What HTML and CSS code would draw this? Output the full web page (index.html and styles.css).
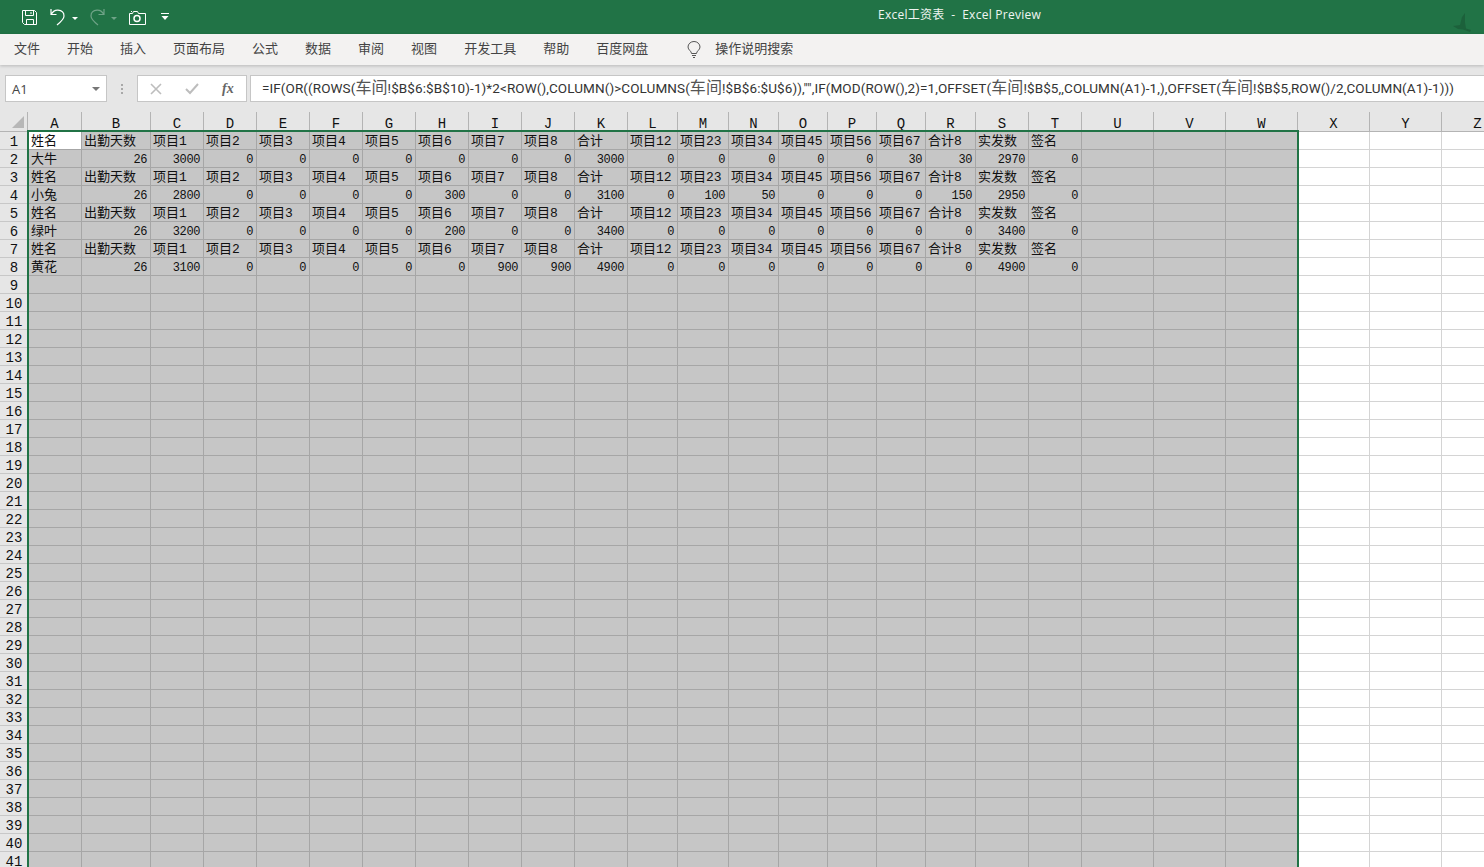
FILE: index.html
```html
<!DOCTYPE html>
<html lang="zh-CN">
  <head>
    <meta charset="utf-8" />
    <title>Excel工资表 - Excel Preview</title>
    <link rel="stylesheet" href="styles.css">
  </head>

  <body>
    <div class="title-bar">
      <div class="qat">
        <svg class="qat-save" width="17" height="17" viewBox="0 0 17 17" fill="none" stroke="#fff">
          <path d="M1.5 1.5h12l2 2v12h-12l-2-2z" />
          <path d="M4.5 1.5v5h8v-5M10 3v2M5.5 15.5v-5h7v5" />
        </svg>
        <svg class="qat-undo" width="16" height="18" viewBox="0 0 16 18" fill="none" stroke="#fff" stroke-width="1.2">
          <path d="M1 1v5.5h5.5M1.3 6.3C3 3.3 5.5 2 8 2.2c3.400.3 6 2.500 6 5.800 0 2.500-1.500 4.500-7 9" />
        </svg>
        <span class="caret"></span>
        <svg class="qat-redo" width="16" height="18" viewBox="0 0 16 18" fill="none" stroke="#6fa387" stroke-width="1.2">
          <path d="M15 1v5.5H9.500M14.700 6.300C13 3.300 10.500 2 8 2.200 4.600 2.500 2 4.700 2 8c0 2.500 1.500 4.500 7 9" />
        </svg>
        <span class="caret caret-dim"></span>
        <svg class="qat-camera" width="17" height="15" viewBox="0 0 17 15" fill="none" stroke="#fff">
          <path d="M.5 3.500h3l1-2h4l1 2h7v11H.5z" />
          <circle cx="8" cy="8.500" r="3" stroke-width="1.500" />
          <path d="M2.500 1v1" />
        </svg>
        <svg class="qat-more" width="8" height="8" viewBox="0 0 8 8" fill="#fff">
          <path d="M0 0h8v1H0zM.5 3h7L4 7z" />
        </svg>
      </div>
      <div class="doc-title">Excel工资表&nbsp; - &nbsp;Excel Preview</div>
      <svg class="bird" width="18" height="20" viewBox="0 0 18 20" fill="#1c613b">
        <path d="M12 0 9 4 7 12 0 13l5 3 5 .500 7 2.500 1-2-5-1.500-1-6z" />
      </svg>
    </div>

    <div class="tabs">
      <span>文件</span>
      <span>开始</span>
      <span>插入</span>
      <span>页面布局</span>
      <span>公式</span>
      <span>数据</span>
      <span>审阅</span>
      <span>视图</span>
      <span>开发工具</span>
      <span>帮助</span>
      <span>百度网盘</span>
      <svg class="bulb" width="14" height="18" viewBox="0 0 14 18" fill="none" stroke="#555">
        <path d="M4.500 12.500C4.500 10 1 9 1 6a6 5.500 0 0 1 12 0c0 3-3.500 4-3.500 6.500z" />
        <path d="M5 14.500h4M6 16.500h2" />
      </svg>
      <span class="search">操作说明搜索</span>
    </div>

    <div class="formula-bar">
      <div class="name-box">
        <span>A1</span>
        <span class="name-arrow"></span>
      </div>
      <div class="bar-dots"><i></i><i></i><i></i></div>
      <div class="fx-box">
        <svg width="12" height="12" viewBox="0 0 12 12" stroke="#bdbdbd" stroke-width="1.600">
          <path d="M1 1l10 10M11 1 1 11" />
        </svg>
        <svg width="14" height="12" viewBox="0 0 14 12" fill="none" stroke="#bdbdbd" stroke-width="2">
          <path d="M1 6l4 4 8-9" />
        </svg>
        <span class="fx">fx</span>
      </div>
      <div class="formula">=IF(OR((ROWS(<span class="cjk">车间</span>!$B$6:$B$10)-1)*2&lt;ROW(),COLUMN()&gt;COLUMNS(<span class="cjk">车间</span>!$B$6:$U$6)),"",IF(MOD(ROW(),2)=1,OFFSET(<span class="cjk">车间</span>!$B$5,,COLUMN(A1)-1,),OFFSET(<span class="cjk">车间</span>!$B$5,ROW()/2,COLUMN(A1)-1)))</div>
    </div>

    <div class="sheet-wrap">
      <div class="sheet" id="sheet"></div>
      <div class="selection"></div>
    </div>

    <script src="grid.js"></script>
  </body>
</html>
```

FILE: styles.css
```css
html,
body {
  margin: 0;
  height: 867px;
  overflow: hidden;
  background: #e6e6e6;
}

body {
  font-family: "Noto Sans CJK SC", sans-serif;
  color: #444;
}

.title-bar {
  display: flex;
  align-items: center;
  height: 34px;
  background: #217346;
  position: relative;
}

.qat {
  display: flex;
  align-items: center;
  width: 878px;
  padding-left: 21px;
  box-sizing: border-box;
}

.qat-undo {
  margin-left: 12px;
}

.qat-redo {
  margin-left: 11px;
}

.qat-camera {
  margin-left: 12px;
}

.qat-more {
  margin-left: 15px;
}

.caret {
  width: 0;
  height: 0;
  margin-left: 6px;
  margin-top: 2px;
  border-left: 3px solid transparent;
  border-right: 3px solid transparent;
  border-top: 3px solid #fff;
}

.caret-dim {
  border-top-color: #6fa387;
}

.doc-title {
  font-family: "Open Sans", "Noto Sans CJK SC", sans-serif;
  font-size: 12px;
  letter-spacing: 0.26px;
  color: #f0f5f2;
  margin-top: -6px;
  white-space: nowrap;
}

.bird {
  position: absolute;
  left: 1453px;
  top: 13px;
}

.tabs {
  display: flex;
  align-items: center;
  gap: 27px;
  height: 31px;
  padding-left: 14px;
  padding-bottom: 4px;
  box-sizing: border-box;
  background: #f3f2f1;
  box-shadow: 0 1px 3px rgba(0, 0, 0, 0.2);
  font-size: 13px;
  position: relative;
}

.bulb {
  margin-left: 12px;
  margin-top: 4px;
}

.search {
  margin-left: -13px;
}

.formula-bar {
  display: flex;
  align-items: stretch;
  height: 27px;
  margin-top: 10px;
  padding-left: 5px;
}

.name-box {
  display: flex;
  align-items: center;
  justify-content: space-between;
  box-sizing: border-box;
  width: 102px;
  padding: 0 6px;
  background: #fff;
  border: 1px solid #c6c6c6;
  font-family: "Open Sans", sans-serif;
  font-size: 13px;
}

.name-arrow {
  width: 0;
  height: 0;
  border-left: 4px solid transparent;
  border-right: 4px solid transparent;
  border-top: 4px solid #777;
}

.bar-dots {
  display: flex;
  flex-direction: column;
  justify-content: center;
  gap: 2px;
  width: 30px;
  align-items: center;
}

.bar-dots i {
  width: 2px;
  height: 2px;
  background: #a8a8a8;
}

.fx-box {
  display: flex;
  align-items: center;
  box-sizing: border-box;
  width: 110px;
  padding-left: 12px;
  gap: 23px;
  background: #fff;
  border: 1px solid #c6c6c6;
}

.fx {
  font-family: "Liberation Serif", serif;
  font-style: italic;
  font-weight: bold;
  font-size: 14px;
  color: #666;
}

.formula {
  flex: 1;
  margin-left: 3px;
  padding-left: 11px;
  background: #fff;
  border: 1px solid #c6c6c6;
  border-right: 0;
  font-family: "Roboto", "Noto Sans CJK SC", sans-serif;
  font-size: 13.5px;
  letter-spacing: 0.09px;
  line-height: 23px;
  color: #333;
  white-space: nowrap;
  overflow: hidden;
}

.formula .cjk {
  font-size: 16px;
  color: #555;
}

.sheet-wrap {
  position: relative;
  margin-top: 10px;
}

.sheet {
  display: grid;
  grid-template-columns: 28px 54px 69px repeat(9, 53px) 50px 51px 50px 49px 49px 49px 50px 53px 53px repeat(6, 72px);
  grid-template-rows: 20px;
  grid-auto-rows: 18px;
  width: 1600px;
  font-family: "Liberation Mono", "Noto Sans CJK SC", monospace;
  color: #111;
}

.corner {
  position: relative;
  border-right: 1px solid #b4b4b4;
  border-bottom: 1px solid #b4b4b4;
}

.corner::after {
  content: "";
  position: absolute;
  right: 3px;
  bottom: 3px;
  width: 0;
  height: 0;
  border-left: 12px solid transparent;
  border-bottom: 12px solid #b7b7b7;
}

.col-head {
  text-align: center;
  font-size: 14px;
  line-height: 25px;
  background: #e6e6e6;
  border-right: 1px solid #b4b4b4;
  border-bottom: 1px solid #b4b4b4;
}

.row-head {
  text-align: center;
  font-size: 14px;
  line-height: 21px;
  background: #e6e6e6;
  border-bottom: 1px solid #c8c8c8;
  overflow: hidden;
}

.cell {
  box-sizing: border-box;
  padding: 1px 3px 0 2px;
  font-size: 13px;
  line-height: 18px;
  background: #fff;
  border-right: 1px solid #d4d4d4;
  border-bottom: 1px solid #d4d4d4;
  white-space: nowrap;
  overflow: hidden;
}

.row-head + .cell {
  padding-left: 3px;
}

.cell.selected {
  background: #c6c6c6;
  border-right-color: #a6a6a6;
  border-bottom-color: #a6a6a6;
}

.cell.active {
  background: #fff;
}

.cell.num {
  text-align: right;
  font-size: 12px;
  letter-spacing: -0.4px;
}

.selection {
  position: absolute;
  left: 27px;
  top: 18px;
  width: 1268px;
  height: 760px;
  border: 2px solid #217346;
  pointer-events: none;
}
```

FILE: grid.js
```js
const letters = "ABCDEFGHIJKLMNOPQRSTUVWXYZ".split("");
const rowCount = 41;
const lastSelected = 22; // column W

const header = ["姓名", "出勤天数", "项目1", "项目2", "项目3", "项目4", "项目5", "项目6", "项目7", "项目8", "合计",
  "项目12", "项目23", "项目34", "项目45", "项目56", "项目67", "合计8", "实发数", "签名"];

const people = [
  ["大牛", 26, 3000, 0, 0, 0, 0, 0, 0, 0, 3000, 0, 0, 0, 0, 0, 30, 30, 2970, 0],
  ["小兔", 26, 2800, 0, 0, 0, 0, 300, 0, 0, 3100, 0, 100, 50, 0, 0, 0, 150, 2950, 0],
  ["绿叶", 26, 3200, 0, 0, 0, 0, 200, 0, 0, 3400, 0, 0, 0, 0, 0, 0, 0, 3400, 0],
  ["黄花", 26, 3100, 0, 0, 0, 0, 0, 900, 900, 4900, 0, 0, 0, 0, 0, 0, 0, 4900, 0]
];

function addDiv(parent, className, text) {
  const div = document.createElement("div");
  div.className = className;
  if (text !== undefined) {
    div.textContent = text;
  }
  parent.appendChild(div);
}

const sheet = document.getElementById("sheet");

addDiv(sheet, "corner");
letters.forEach(letter => addDiv(sheet, "col-head", letter));

for (let row = 1; row <= rowCount; row++) {
  addDiv(sheet, "row-head", row);
  // rows 1-8 alternate the header line and one person
  let values = [];
  if (row <= 8) {
    values = row % 2 === 1 ? header : people[row / 2 - 1];
  }
  letters.forEach((letter, col) => {
    let className = "cell";
    if (col <= lastSelected) {
      className += " selected";
    }
    if (row === 1 && col === 0) {
      className += " active";
    }
    if (typeof values[col] === "number") {
      className += " num";
    }
    addDiv(sheet, className, values[col]);
  });
}
```
